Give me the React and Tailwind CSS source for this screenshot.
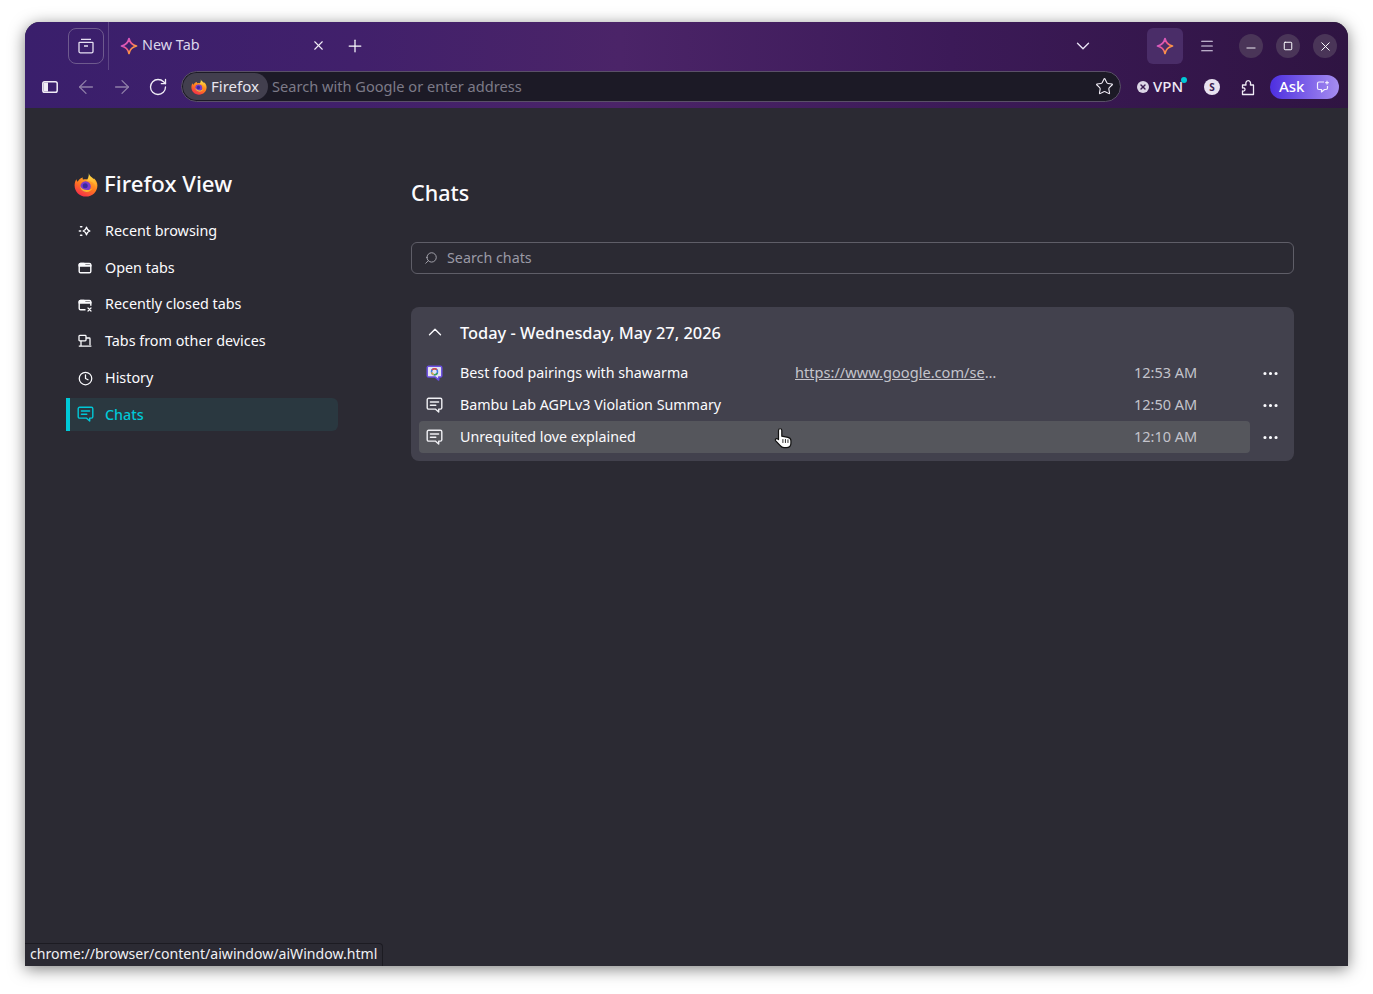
import React from 'react';
import { ArrowLeft, ArrowRight, ChevronDown, ChevronUp, Clock, Ellipsis, Menu, Minus, Plus, RotateCw, Search, Square, Star, X } from 'lucide-react';

function FirefoxLogo({ size = 16 }) {
  return (
    <svg width={size} height={size} viewBox="0 0 24 24" className="shrink-0">
      <defs>
        <linearGradient id="ffBody" x1="0.8" y1="0.05" x2="0.2" y2="1">
          <stop offset="0" stopColor="#ffb52e" />
          <stop offset="0.45" stopColor="#ff7a1f" />
          <stop offset="1" stopColor="#f5244f" />
        </linearGradient>
        <linearGradient id="ffFlame" x1="0.5" y1="0" x2="0.5" y2="1">
          <stop offset="0" stopColor="#ffe14d" />
          <stop offset="1" stopColor="#ff9a1f" />
        </linearGradient>
      </defs>
      <path d="M12 23.5C5.6 23.5 .6 18.6.6 12.4c0-2.4.7-4.6 1.8-6.2.2 1.2.7 2 1.4 2.5C4.6 6.4 6.6 4.7 9 4.4c-.5 1-.4 1.6.1 2 2.2-.6 4.8-.2 6.6 1.2l4.4-2.2c2.1 2 3.3 4.4 3.3 7 0 6.2-5 11.1-11.4 11.1Z" fill="url(#ffBody)" />
      <path d="M14.8.3c.3 2.5 3.2 3.9 5.2 6.1 2.1 2.4 3 5.6 2.1 8.4-.7-2.7-2.5-5-5.2-6.2-1.4-.7-3-.9-4.6-.6 1.9-2.2 2.7-5 2.5-7.7Z" fill="url(#ffFlame)" />
      <circle cx="11.6" cy="13.4" r="5.2" fill="#7a3bc9" />
      <circle cx="11.2" cy="12.8" r="2.5" fill="#3a2a9e" />
      <path d="M5.8 12.8c.6 3.8 3.5 6.2 6.7 6.2 3 0 5.3-1.8 6.2-4.5-1.4 1.8-3.5 2.7-5.6 2.6-3.1-.1-5.8-1.6-7.3-4.3Z" fill="#ffb52e" />
    </svg>
  );
}

function AiStar({ size = 18 }) {
  return (
    <svg width={size} height={size} viewBox="0 0 18 18" fill="none" className="shrink-0">
      <defs>
        <linearGradient id="aiStar" x1="0.1" y1="0.1" x2="1" y2="0.9">
          <stop offset="0" stopColor="#c85ce0" />
          <stop offset="0.45" stopColor="#f0568e" />
          <stop offset="0.75" stopColor="#ff9a3c" />
          <stop offset="1" stopColor="#a04fe0" />
        </linearGradient>
      </defs>
      <path d="M9 1.5C9.9 5.6 11.8 8 16.5 9 11.8 10 9.9 12.4 9 16.5 8.1 12.4 6.2 10 1.5 9 6.2 8 8.1 5.6 9 1.5Z" stroke="url(#aiStar)" strokeWidth="1.7" strokeLinejoin="round" />
    </svg>
  );
}

function ChatIcon({ className = 'text-[#f0f0f4]' }) {
  return (
    <svg width="17" height="17" viewBox="0 0 17 17" fill="none" stroke="currentColor" strokeWidth="1.4" strokeLinejoin="round" strokeLinecap="round" className={`shrink-0 ${className}`}>
      <path d="M2.6 1.3h11.8a1.4 1.4 0 0 1 1.4 1.4v8a1.4 1.4 0 0 1-1.4 1.4h-1.7v3l-3.4-3H2.6a1.4 1.4 0 0 1-1.4-1.4v-8a1.4 1.4 0 0 1 1.4-1.4Z" />
      <path d="M4.4 5h8.2M4.4 8.3h5.4" />
    </svg>
  );
}

function GoogleChatIcon() {
  return (
    <svg width="17" height="17" viewBox="0 0 17 17" fill="none" className="shrink-0">
      <path d="M2.6 1.3h11.8a1.4 1.4 0 0 1 1.4 1.4v8a1.4 1.4 0 0 1-1.4 1.4h-1.7v3l-3.4-3H2.6a1.4 1.4 0 0 1-1.4-1.4v-8a1.4 1.4 0 0 1 1.4-1.4Z" fill="#e6e4f2" stroke="#6a4fe0" strokeWidth="1.5" strokeLinejoin="round" />
      <circle cx="8.5" cy="6.7" r="3" stroke="#3f7ee8" strokeWidth="1.5" />
      <path d="M6 5.2a3 3 0 0 1 4.8-.4" stroke="#e0483a" strokeWidth="1.5" />
      <path d="M5.6 7.4a3 3 0 0 0 2.2 2.2" stroke="#e9b52f" strokeWidth="1.5" />
      <path d="M8 9.7a3 3 0 0 0 3.3-1.7" stroke="#38a558" strokeWidth="1.5" />
    </svg>
  );
}

function RecentIcon() {
  return (
    <svg width="16" height="16" viewBox="0 0 16 16" fill="none" stroke="currentColor" strokeWidth="1.3" strokeLinejoin="round">
      <path d="M9.5 4.2C9.9 6.3 10.6 7.3 12.9 8c-2.3.7-3 1.7-3.4 3.8-.4-2.1-1.1-3.1-3.4-3.8 2.3-.7 3-1.7 3.4-3.8Z" />
      <path d="M3.6 3.8h1.2M2.4 8h1.2M3.6 12.2h1.2" strokeLinecap="round" strokeWidth="1.6" />
    </svg>
  );
}

function OpenTabsIcon() {
  return (
    <svg width="16" height="16" viewBox="0 0 16 16" fill="none" stroke="currentColor" strokeWidth="1.4" strokeLinejoin="round">
      <rect x="2.2" y="3.4" width="11.6" height="9.4" rx="1.4" />
      <path d="M2.2 5.4V4.8a1.4 1.4 0 0 1 1.4-1.4h3.4l1 1.8h5.8v.8H2.2Z" fill="currentColor" />
    </svg>
  );
}

function ClosedTabsIcon() {
  return (
    <svg width="16" height="16" viewBox="0 0 16 16" fill="none" stroke="currentColor" strokeWidth="1.4" strokeLinejoin="round">
      <path d="M8.5 12.8H3.6a1.4 1.4 0 0 1-1.4-1.4V4.8a1.4 1.4 0 0 1 1.4-1.4h8.8a1.4 1.4 0 0 1 1.4 1.4v4" />
      <path d="M2.2 5.4V4.8a1.4 1.4 0 0 1 1.4-1.4h3.4l1 1.8h5.8v.8H2.2Z" fill="currentColor" />
      <path d="M11 11l3 3M14 11l-3 3" strokeLinecap="round" strokeWidth="1.2" />
    </svg>
  );
}

function DevicesIcon() {
  return (
    <svg width="16" height="16" viewBox="0 0 16 16" fill="none" stroke="currentColor" strokeWidth="1.3" strokeLinejoin="round">
      <rect x="2" y="2.4" width="7" height="5.4" rx="0.8" />
      <path d="M9 5h3.2a.8.8 0 0 1 .8.8v6.4" />
      <path d="M1.8 13.2h12.6M4 7.8v5.4" />
    </svg>
  );
}

const navItems = [
  { label: 'Recent browsing', icon: <RecentIcon /> },
  { label: 'Open tabs', icon: <OpenTabsIcon /> },
  { label: 'Recently closed tabs', icon: <ClosedTabsIcon /> },
  { label: 'Tabs from other devices', icon: <DevicesIcon /> },
  { label: 'History', icon: <Clock className="w-[15px] h-[15px]" strokeWidth={2} /> },
];

const chats = [
  { title: 'Best food pairings with shawarma', url: 'https://www.google.com/se', time: '12:53 AM', icon: <GoogleChatIcon /> },
  { title: 'Bambu Lab AGPLv3 Violation Summary', time: '12:50 AM', icon: <ChatIcon /> },
  { title: 'Unrequited love explained', time: '12:10 AM', icon: <ChatIcon />, hover: true },
];

function ChatRow({ chat }) {
  return (
    <div className="flex items-center h-8">
      <div className={`relative shrink-0 flex items-center w-[831px] h-8 rounded-[4px] pl-2 text-[14.25px] text-[#fbfbfe] ${chat.hover ? 'bg-[#55565c]' : ''}`}>
        <div className="w-[33px] flex shrink-0 -ml-px mr-px">{chat.icon}</div>
        <div className="w-[335px] shrink-0 whitespace-nowrap">{chat.title}</div>
        <div className="w-[339px] shrink-0 text-[14.6px] whitespace-nowrap text-[#c4c4cc]">
          {chat.url && <><span className="underline">{chat.url}</span>…</>}
        </div>
        <div className="text-[14.5px] text-[#c4c4cc] whitespace-nowrap">{chat.time}</div>
        {chat.hover && (
          <svg width="20" height="22" viewBox="0 0 18 20" className="absolute left-[355px] top-[6px]">
            <path d="M5.5 1.6c.9 0 1.5.6 1.5 1.5v5.2l5.6 1.1c1.6.3 2.7 1.4 2.7 3v2.3c0 2.5-1.7 4-4.2 4H9c-1.5 0-2.5-.6-3.4-1.8L1.5 12.6c-.8-1-.1-2.3 1.1-2.1.6.1 1 .4 1.4.9V3.100c0-.9.6-1.5 1.5-1.5Z" fill="#fff" stroke="#111" strokeWidth="1.1" strokeLinejoin="round" />
            <path d="M8 11v3.500M10.300 11v3.500M12.600 11.300v3.200" stroke="#111" strokeWidth="0.8" />
          </svg>
        )}
      </div>
      <div className="w-10 shrink-0 flex justify-center text-[#fbfbfe]">
        <Ellipsis className="w-[19px] h-[19px]" strokeWidth={2} />
      </div>
    </div>
  );
}

export default function App() {
  return (
    <div className="h-[994px] overflow-hidden bg-white pt-[22px] pl-[25px] font-['Noto_Sans',sans-serif]">
      <div className="relative w-[1323px] h-[944px] flex flex-col rounded-t-[15px] overflow-hidden bg-[#2b2a33] shadow-[0_3px_16px_rgba(0,0,0,0.5)]">
        <div className="h-[86px] shrink-0 flex flex-col bg-[linear-gradient(90deg,#3a1f6c_0%,#41206b_25%,#4b2468_45%,#3c1a58_70%,#2f1442_100%)] text-[#fbfbfe]">
          {/* tab strip */}
          <div className="h-[48px] flex items-center pl-[43px]">
            <button className="w-9 h-9 shrink-0 rounded-[8px] border border-[#6e5a8e] flex items-center justify-center">
              <svg width="18" height="18" viewBox="0 0 18 18" fill="none" stroke="#e6e0f2" strokeWidth="1.3" strokeLinejoin="round">
                <path d="M4 2.4h10M2.6 5.4h12.800a.6.6 0 0 1 .6.6v8.400a1.400 1.400 0 0 1-1.400 1.400H3.400A1.400 1.400 0 0 1 2 14.400V6a.6.6 0 0 1 .6-.6Z" />
                <path d="M7 9h4" />
              </svg>
            </button>
            <div className="w-px h-[48px] shrink-0 bg-[#5d4585] ml-1" />
            <div className="flex items-center w-[217px] shrink-0 pl-[11px]">
              <AiStar />
              <span className="ml-[4px] mb-[2px] text-[14.4px] text-[#dcd6ea]">New Tab</span>
              <X className="w-[15px] h-[15px] ml-auto mr-[0.5px] text-[#f0ecf6]" strokeWidth={1.8} />
            </div>
            <Plus className="w-5 h-5 ml-[19px] shrink-0" strokeWidth={1.5} />
            <ChevronDown className="w-[22px] h-[22px] ml-[707px] shrink-0 text-[#e6e0f2]" strokeWidth={1.5} />
            <div className="w-9 h-9 shrink-0 rounded-[6px] bg-[#4a2d68] flex items-center justify-center ml-[53px]">
              <AiStar />
            </div>
            <Menu className="w-4 h-4 ml-4 shrink-0 text-[#e6e0f2]" strokeWidth={1.6} />
            <div className="flex items-center gap-[13px] ml-[24px] shrink-0">
              <div className="w-6 h-6 rounded-full bg-[#4a3558] flex items-center justify-center"><Minus className="w-[14px] h-[14px] mt-1" strokeWidth={1.6} /></div>
              <div className="w-6 h-6 rounded-full bg-[#4a3558] flex items-center justify-center"><Square className="w-[10px] h-[10px]" strokeWidth={2.4} /></div>
              <div className="w-6 h-6 rounded-full bg-[#4a3558] flex items-center justify-center"><X className="w-[15px] h-[15px]" strokeWidth={1.6} /></div>
            </div>
          </div>
          {/* nav bar */}
          <div className="h-[38px] flex items-start">
            <div className="w-[156px] shrink-0 h-8 flex items-center pl-[17px] mt-[1px]">
              <svg width="16" height="16" viewBox="0 0 16 16" className="shrink-0">
                <rect x="0.8" y="2.8" width="14.4" height="10.4" rx="1.8" fill="none" stroke="#f0ecf6" strokeWidth="1.5" />
                <rect x="1.5" y="3.5" width="4.5" height="9" fill="#f0ecf6" />
              </svg>
              <ArrowLeft className="w-[22px] h-[22px] ml-[17px] shrink-0 text-[#8f7fa8]" strokeWidth={1.4} />
              <ArrowRight className="w-[22px] h-[22px] ml-[14px] shrink-0 text-[#8f7fa8]" strokeWidth={1.4} />
              <RotateCw className="w-5 h-5 ml-[15px] shrink-0 text-[#f0ecf6]" strokeWidth={1.6} />
            </div>
            <div className="w-[940px] shrink-0 h-[31px] mt-[1px] flex items-center rounded-full bg-[#1c1a26] border border-[#5a5068] pl-[1px] pr-[6px]">
              <div className="h-[27px] w-[85px] shrink-0 rounded-full bg-[#423f4e] flex items-center pl-2 text-[15px] text-[#e8e6ee]">
                <FirefoxLogo size={16} />
                <span className="ml-1">Firefox</span>
              </div>
              <span className="ml-1 text-[14.6px] text-[#7d7a88]">Search with Google or enter address</span>
              <Star className="w-[19px] h-[19px] ml-auto text-[#f0ecf6]" strokeWidth={1.4} />
            </div>
            <div className="flex items-center h-8 w-[48px] shrink-0 ml-[16px] relative mt-[1px]">
              <span className="w-[12px] h-[12px] rounded-full bg-[#dcd6e6] flex items-center justify-center">
                <X className="w-[8px] h-[8px] text-[#3a1d50]" strokeWidth={4} />
              </span>
              <span className="ml-[4px] mb-[2px] text-[15px] font-medium text-[#efeaf5]">VPN</span>
              <span className="absolute right-[-2px] top-[6px] w-[6px] h-[6px] rounded-full bg-[#00c8d7]" />
            </div>
            <div className="w-4 h-4 shrink-0 rounded-full bg-[#e8e2f0] text-[#3a1d50] text-[10px] font-bold flex items-center justify-center ml-[19px] mt-[9px]">S</div>
            <svg width="16" height="17" viewBox="0 0 16 17" fill="none" stroke="#f0ecf6" strokeWidth="1.3" strokeLinejoin="round" className="ml-[21px] mt-[9px] shrink-0">
              <path d="M1.5 15.5V12c1.5.3 2.5-.3 2.5-1.5S3 8.500 1.500 9V6H5C4.400 4 5.200 1.700 7.200 1.700S10 4 9.400 6h3.100v9.500H1.500Z" />
            </svg>
            <div className="w-[69px] h-6 shrink-0 rounded-full bg-[linear-gradient(90deg,#4d2fe0,#a68df0)] flex items-center justify-between pl-[9px] pr-[9px] ml-[13px] mt-[5px] text-[15px] font-medium text-white">
              <span className="mb-[2px]">Ask</span>
              <svg width="14" height="14" viewBox="0 0 14 14" fill="none" stroke="#f4f0ff" strokeWidth="1.2" strokeLinejoin="round">
                <path d="M8 2H3a1.500 1.500 0 0 0-1.500 1.500V8A1.500 1.500 0 0 0 3 9.500h2.500V12l3-2.500H10A1.500 1.500 0 0 0 11.500 8V6" />
                <path d="M11 .8v3.600M9.200 2.600h3.600" strokeWidth="1.1" />
              </svg>
            </div>
          </div>
        </div>

        {/* page */}
        <div className="flex-1 flex">
          <aside className="w-[386px] shrink-0 pl-[41px] pt-[61px]">
            <div className="flex items-center h-8 pl-2 mb-[13.5px]">
              <FirefoxLogo size={24} />
              <h1 className="ml-[6px] mb-[2px] text-[22.2px] font-medium text-[#fbfbfe]">Firefox View</h1>
            </div>
            <nav className="w-[272px] flex flex-col gap-[3.8px]">
              {navItems.map((item) => (
                <div key={item.label} className="h-[33px] flex items-center pl-[11px] text-[14.35px] text-[#fbfbfe]">
                  <span className="w-4 h-4 flex items-center justify-center mr-[12px]">{item.icon}</span>
                  <span className="mb-[1px]">{item.label}</span>
                </div>
              ))}
              <div className="h-[33px] flex items-center pl-[7px] text-[14.35px] font-medium text-[#00c8d7] bg-[#2a3840] rounded-r-[6px] border-l-4 border-[#00c8d7]">
                <span className="w-[17px] flex mr-[11px]"><ChatIcon className="text-[#00c8d7]" /></span>
                <span className="mb-[1px]">Chats</span>
              </div>
            </nav>
          </aside>

          <main className="w-[883px] pt-[69px]">
            <h2 className="h-8 flex items-center text-[21.5px] font-medium text-[#fbfbfe]">Chats</h2>
            <div className="h-8 mt-[33px] flex items-center rounded-[6px] border border-[#5f5e68] pl-3 text-[14.3px] text-[#9a99a5]">
              <Search className="w-[14px] h-[14px] -scale-x-100 text-[#b0afb8]" strokeWidth={1.5} />
              <span className="ml-[9px]">Search chats</span>
            </div>
            <section className="mt-[33px] h-[154px] bg-[#42414d] rounded-[8px] p-2 pt-0">
              <div className="h-[50px] flex items-center pl-[5px] text-[#fbfbfe]">
                <ChevronUp className="w-[22px] h-[22px] shrink-0" strokeWidth={1.5} />
                <h3 className="ml-[14px] mt-[2px] text-[16.4px] font-medium">Today - Wednesday, May 27, 2026</h3>
              </div>
              {chats.map((chat) => (
                <ChatRow key={chat.title} chat={chat} />
              ))}
            </section>
          </main>
        </div>

        <div className="absolute left-0 bottom-0 w-[358px] h-[23px] flex items-center pl-[5px] bg-[#2b2a33] border-t border-r border-[#1c1b22] rounded-tr-[4px] text-[14.1px] text-[#f0f0f4] whitespace-nowrap">
          <span className="mb-[2px]">chrome://browser/content/aiwindow/aiWindow.html</span>
        </div>
      </div>
    </div>
  );
}
